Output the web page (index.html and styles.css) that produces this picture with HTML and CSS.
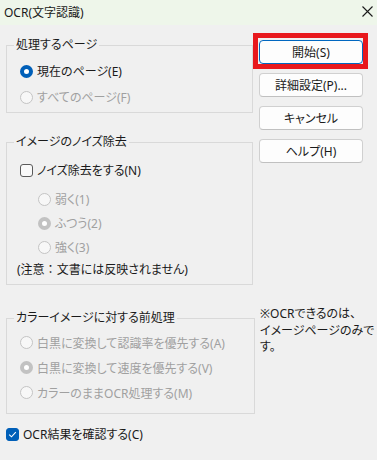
FILE: index.html
```html
<!DOCTYPE html>
<html lang="ja">
<head>
  <meta charset="UTF-8" />
  <meta name="viewport" content="width=device-width, initial-scale=1.0"/>
  <title>OCR(文字認識)</title>
  <link rel="stylesheet" href="styles.css">
</head>
<body>
  <div class="titlebar">
    <span class="title">OCR(文字認識)</span>
    <svg class="close" width="11" height="11" viewBox="0 0 11 11">
      <path d="M0.5 0.5 L10.5 10.5 M10.5 0.5 L0.5 10.5" stroke="#1a1a1a" stroke-width="1.1" fill="none"/>
    </svg>
  </div>

  <div class="dialog">
    <div class="left">
      <fieldset class="group group-pages">
        <legend>処理するページ</legend>
        <label class="opt"><span class="radio on"></span>現在のページ(E)</label>
        <label class="opt off"><span class="radio"></span>すべてのページ(F)</label>
      </fieldset>

      <fieldset class="group group-noise">
        <legend>イメージのノイズ除去</legend>
        <label class="opt"><span class="check"></span>ノイズ除去をする(N)</label>
        <div class="sub">
          <label class="opt off"><span class="radio"></span>弱く(1)</label>
          <label class="opt off"><span class="radio on"></span>ふつう(2)</label>
          <label class="opt off"><span class="radio"></span>強く(3)</label>
        </div>
        <p class="caution">(注意<span class="wide">：</span>文書には反映されません)</p>
      </fieldset>
    </div>

    <div class="buttons">
      <div class="highlight"><button class="default">開始(S)</button></div>
      <button>詳細設定(P)...</button>
      <button>キャンセル</button>
      <button>ヘルプ(H)</button>
    </div>

    <fieldset class="group group-color">
      <legend>カラーイメージに対する前処理</legend>
      <label class="opt off"><span class="radio"></span>白黒に変換して認識率を優先する(A)</label>
      <label class="opt off"><span class="radio on"></span>白黒に変換して速度を優先する(V)</label>
      <label class="opt off"><span class="radio"></span>カラーのままOCR処理する(M)</label>
    </fieldset>

    <p class="note">※OCRできるのは、<br>イメージページのみで<br>す。</p>

    <label class="opt confirm">
      <span class="check on">
        <svg width="9" height="9" viewBox="0 0 9 9"><path d="M1.2 4.6 L3.5 6.8 L7.8 2.2" stroke="#fff" stroke-width="1.1" fill="none"/></svg>
      </span>OCR結果を確認する(C)</label>
  </div>
</body>
</html>
```

FILE: styles.css
```css
* {
  box-sizing: border-box;
}
body {
  margin: 0;
  background: #f0f0f0;
  color: #1a1a1a;
  font-family: "Noto Sans", "Noto Sans CJK JP", sans-serif;
  font-size: 12px;
  font-feature-settings: "palt";
  width: 377px;
  height: 460px;
  overflow: hidden;
}
.titlebar {
  height: 25px;
  background: #eef6ea;
  display: flex;
  align-items: center;
  justify-content: space-between;
  padding: 0 4px 2px 4px;
}
.title {
  font-size: 12px;
}
.dialog {
  display: grid;
  grid-template-columns: 249px 104px;
  column-gap: 4px;
  padding: 12px 0 0 6px;
}
.left {
  display: flex;
  flex-direction: column;
}
.group {
  margin: 0;
  border: 1px solid #d9d9d9;
  padding: 0 0 0 13px;
  min-width: 0;
}
.group legend {
  margin-left: -6px;
  padding: 0 2px;
  line-height: 16px;
  color: #1a1a1a;
}
.group-pages {
  width: 247px;
  padding-top: 5px;
  padding-bottom: 2px;
}
.group-noise {
  width: 247px;
  margin-top: 21px;
  padding-top: 7px;
  padding-bottom: 4px;
}
.group-color {
  width: 249px;
  margin-top: 25px;
  padding-top: 4px;
  padding-bottom: 8px;
}
.opt {
  display: flex;
  align-items: center;
  gap: 4px;
  height: 26px;
  white-space: nowrap;
}
.group-color .opt {
  height: 25px;
}
.opt.off {
  color: #a0a0a0;
}
.sub {
  margin-top: 4px;
  padding-left: 18px;
}
.sub .opt {
  height: 24px;
}
.caution {
  margin: 1px 0 0 -3px;
  line-height: 20px;
  white-space: nowrap;
}
.wide {
  font-feature-settings: normal;
}
.radio {
  width: 13px;
  height: 13px;
  border-radius: 50%;
  border: 1px solid #c4c4c4;
  background: #f7f7f7;
  flex: none;
}
.radio.on {
  border: 4px solid #005fb8;
  background: #ffffff;
}
.off .radio.on {
  border-color: #c2c2c2;
}
.check {
  width: 13px;
  height: 13px;
  border: 1px solid #5a5a5a;
  border-radius: 3px;
  background: #f9f9f9;
  flex: none;
  display: flex;
  align-items: center;
  justify-content: center;
}
.check.on {
  background: #005fb8;
  border-color: #005fb8;
}
.buttons {
  display: flex;
  flex-direction: column;
  gap: 9px;
  padding-top: 3px;
}
.highlight {
  position: relative;
  display: flex;
  flex-direction: column;
}
.highlight::after {
  content: "";
  position: absolute;
  top: -7px;
  left: -6px;
  right: -5px;
  bottom: -5px;
  border: 5px solid #e8181d;
  pointer-events: none;
}
button {
  height: 24px;
  font-family: inherit;
  font-size: 12px;
  font-feature-settings: "palt";
  color: #1a1a1a;
  background: #fdfdfd;
  border: 1px solid #d0d0d0;
  border-bottom-color: #c0c0c0;
  border-radius: 4px;
  padding: 0;
}
button.default {
  border: 1.5px solid #0067c0;
}
.note {
  margin: 21px 0 0 1px;
  line-height: 16.5px;
  align-self: start;
  white-space: nowrap;
}
.confirm {
  grid-column: 1 / 3;
  margin-top: 10px;
  height: 20px;
}
```
